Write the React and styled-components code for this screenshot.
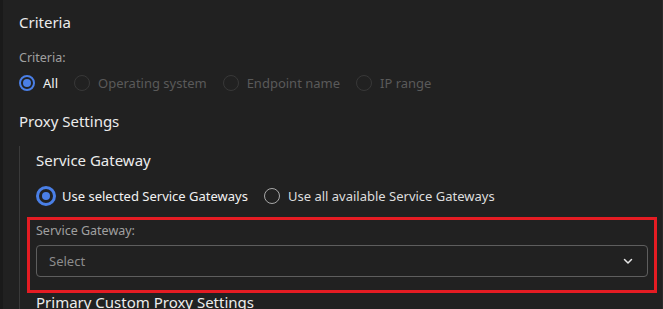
import React from "react";
import styled, { createGlobalStyle } from "styled-components";

const Global = createGlobalStyle`
  html, body { margin: 0; padding: 0; background: #212121; }
  body { font-family: "Noto Sans", "Open Sans", sans-serif; color: #e6e6e6; overflow: hidden; }
`;

const Page = styled.div`
  display: flex;
  width: 663px;
  height: 309px;
  overflow: hidden;
  background: #212121;
`;

const Rail = styled.div`
  width: 3px;
  flex: none;
  background: #1a1a1a;
`;

const Content = styled.div`
  flex: 1;
  padding: 11px 0 0 16px;
  border-right: 1px solid #2a2a2a;
`;

const Heading = styled.div`
  font-size: 15px;
  line-height: 22px;
  color: #ececec;
  margin-top: ${(p) => p.$mt || 0}px;
  white-space: nowrap;
`;

const Label = styled.div`
  font-size: 12.5px;
  line-height: 18px;
  color: #a0a0a0;
  margin-top: ${(p) => p.$mt || 0}px;
`;

const RadioRow = styled.div`
  display: flex;
  align-items: center;
  gap: ${(p) => p.$gap || 16}px;
  margin-top: ${(p) => p.$mt || 0}px;
`;

const Option = styled.label`
  display: flex;
  align-items: center;
  gap: ${(p) => p.$gap || 8}px;
  font-size: 13px;
  line-height: 20px;
  color: ${(p) => (p.$disabled ? "#5a5a5a" : p.$selected ? "#f2f2f2" : "#dedede")};
`;

const Circle = styled.span`
  box-sizing: border-box;
  width: ${(p) => p.$size}px;
  height: ${(p) => p.$size}px;
  border-radius: 50%;
  border: ${(p) => (p.$selected ? `${p.$ring}px solid #4a7fe6` : `1px solid ${p.$disabled ? "#383838" : "#a8a8a8"}`)};
  display: flex;
  align-items: center;
  justify-content: center;
  flex: none;
  &::after {
    content: "";
    display: ${(p) => (p.$selected ? "block" : "none")};
    width: ${(p) => p.$dot}px;
    height: ${(p) => p.$dot}px;
    border-radius: 50%;
    background: #4a7fe6;
  }
`;

const Indent = styled.div`
  margin-top: 14px;
  border-left: 1px solid #3a3a3a;
  padding-left: 16px;
  padding-top: 3px;
`;

const Highlight = styled.div`
  margin: 11px 5px 0 -9px;
  border: 3px solid #e51c23;
  padding: 2px 6px 13px 6px;
`;

const Select = styled.div`
  margin-top: 5px;
  height: 32px;
  box-sizing: border-box;
  border: 1px solid #5e5e5e;
  border-radius: 4px;
  display: flex;
  align-items: center;
  justify-content: space-between;
  padding: 0 13px 0 12px;
  font-size: 13px;
  color: #8c8c8c;
`;

const Chevron = () => (
  <svg width="12" height="12" viewBox="0 0 12 12" fill="none">
    <path d="M2.5 4.5 L6 8 L9.5 4.5" stroke="#e6e6e6" strokeWidth="1.5" strokeLinecap="round" strokeLinejoin="round" />
  </svg>
);

const Radio = ({ label, selected, disabled, size = 16, ring = 2, dot = 8, gap }) => (
  <Option $selected={selected} $disabled={disabled} $gap={gap}>
    <Circle $size={size} $ring={ring} $dot={dot} $selected={selected} $disabled={disabled} />
    {label}
  </Option>
);

export default function App() {
  return (
    <>
      <Global />
      <Page>
        <Rail />
        <Content>
          <Heading>Criteria</Heading>
          <Label $mt={16}>Criteria:</Label>
          <RadioRow $mt={6} $gap={16}>
            <Radio label="All" selected />
            <Radio label="Operating system" disabled />
            <Radio label="Endpoint name" disabled />
            <Radio label="IP range" disabled />
          </RadioRow>
          <Heading $mt={17}>Proxy Settings</Heading>
          <Indent>
            <Heading>Service Gateway</Heading>
            <RadioRow $mt={15} $gap={16}>
              <Radio label="Use selected Service Gateways" selected size={20} ring={3} dot={8} gap={6} />
              <Radio label="Use all available Service Gateways" gap={8} />
            </RadioRow>
            <Highlight>
              <Label>Service Gateway:</Label>
              <Select>
                <span>Select</span>
                <Chevron />
              </Select>
            </Highlight>
            <Heading $mt={-2}>Primary Custom Proxy Settings</Heading>
          </Indent>
        </Content>
      </Page>
    </>
  );
}
